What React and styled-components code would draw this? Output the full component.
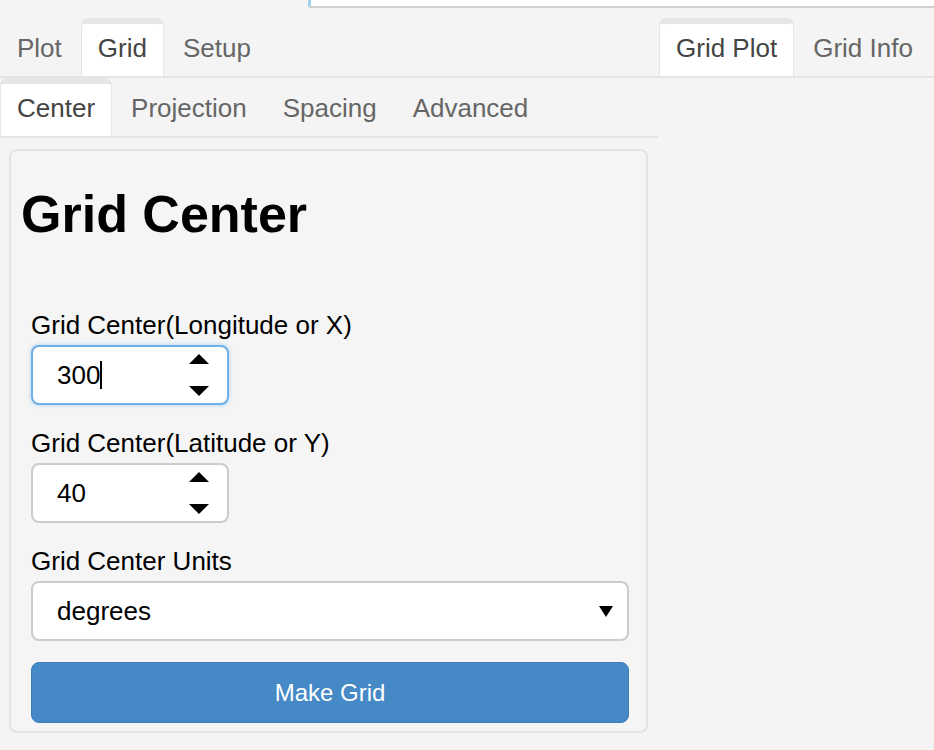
import React from "react";
import styled, { createGlobalStyle } from "styled-components";

const Global = createGlobalStyle`
  html, body { margin: 0; padding: 0; background: #f4f4f4; }
  body { font-family: "Liberation Sans", Arial, Helvetica, sans-serif; color: #000; }
  * { box-sizing: border-box; }
`;

const Page = styled.div`
  width: 934px;
  height: 750px;
  overflow: hidden;
  background: #f4f4f4;
`;

const TopField = styled.div`
  margin-left: 308px;
  height: 8px;
  background: #fff;
  border-bottom: 2px solid #cfcfcf;
  border-left: 3px solid #9fd3f0;
  border-bottom-left-radius: 3px;
`;

const Columns = styled.div`
  display: grid;
  grid-template-columns: 658px 1fr;
  margin-top: 10px;
`;

const Column = styled.div`
  display: flex;
  flex-direction: column;
`;

const TabBar = styled.div`
  display: flex;
  border-bottom: 2px solid #e4e4e4;
  padding-left: ${(p) => p.$offset || 0}px;
`;

const Tab = styled.div`
  height: 58px;
  padding: 0 16px 3px;
  margin-right: 2px;
  line-height: 49px;
  font-size: 26px;
  white-space: nowrap;
  color: ${(p) => (p.$active ? "#444" : "#666")};
  background: ${(p) => (p.$active ? "#fff" : "transparent")};
  border: 1px solid ${(p) => (p.$active ? "#e6e6e6" : "transparent")};
  border-top: 6px solid ${(p) => (p.$active ? "#e6e6e6" : "transparent")};
  border-bottom: none;
  border-radius: 7px 7px 0 0;
`;

const Panel = styled.div`
  margin: 11px 10px 0 9px;
  padding: 19px 17px 8px 10px;
  background: #f5f5f5;
  border: 2px solid #e4e4e4;
  border-radius: 8px;
`;

const Heading = styled.h1`
  margin: 16px 0 0;
  font-size: 52px;
  line-height: 57px;
  font-weight: 700;
  color: #000;
`;

const Form = styled.div`
  display: flex;
  flex-direction: column;
  gap: 23px;
  padding-left: 10px;
  margin-top: 67px;
`;

const Group = styled.div`
  display: flex;
  flex-direction: column;
  gap: 5px;
`;

const Label = styled.label`
  font-size: 26px;
  line-height: 30px;
  color: #000;
`;

const Field = styled.div`
  display: flex;
  align-items: center;
  justify-content: space-between;
  width: ${(p) => (p.$wide ? "100%" : "198px")};
  height: 60px;
  padding: 0 ${(p) => (p.$wide ? "14px" : "18px")} 0 24px;
  background: #fff;
  border: 2px solid ${(p) => (p.$focus ? "#6fb0e6" : "#cccccc")};
  border-radius: 8px;
  box-shadow: ${(p) => (p.$focus ? "0 0 4px rgba(102,175,233,0.55)" : "none")};
  font-size: 26px;
  color: #000;
`;

const Value = styled.span`
  display: inline-flex;
  align-items: center;
  line-height: 30px;
`;

const Caret = styled.span`
  display: inline-block;
  width: 2px;
  height: 28px;
  background: #000;
`;

const Button = styled.button`
  width: 100%;
  height: 61px;
  border: 1px solid #3c7db9;
  border-radius: 8px;
  background: #4589c6;
  color: #fff;
  font-family: "Liberation Sans", Arial, Helvetica, sans-serif;
  font-size: 24px;
  padding: 0;
  margin-top: -2px;
  cursor: pointer;
`;

const Spinner = () => (
  <svg width="20" height="42" viewBox="0 0 20 42" aria-hidden="true">
    <polygon points="10,0 20,10 0,10" fill="#000" />
    <polygon points="0,32 20,32 10,42" fill="#000" />
  </svg>
);

const DownArrow = () => (
  <svg width="14" height="11" viewBox="0 0 14 11" aria-hidden="true">
    <polygon points="0,0 14,0 7,11" fill="#000" />
  </svg>
);

export default function App() {
  return (
    <Page>
      <Global />
      <TopField />
      <Columns>
        <Column>
          <TabBar>
            <Tab>Plot</Tab>
            <Tab $active>Grid</Tab>
            <Tab>Setup</Tab>
          </TabBar>
          <TabBar>
            <Tab $active>Center</Tab>
            <Tab>Projection</Tab>
            <Tab>Spacing</Tab>
            <Tab>Advanced</Tab>
          </TabBar>
          <Panel>
            <Heading>Grid Center</Heading>
            <Form>
              <Group>
                <Label>Grid Center(Longitude or X)</Label>
                <Field $focus>
                  <Value>
                    300
                    <Caret />
                  </Value>
                  <Spinner />
                </Field>
              </Group>
              <Group>
                <Label>Grid Center(Latitude or Y)</Label>
                <Field>
                  <Value>40</Value>
                  <Spinner />
                </Field>
              </Group>
              <Group>
                <Label>Grid Center Units</Label>
                <Field $wide>
                  <Value>degrees</Value>
                  <DownArrow />
                </Field>
              </Group>
              <Button>Make Grid</Button>
            </Form>
          </Panel>
        </Column>
        <Column>
          <TabBar $offset={1}>
            <Tab $active>Grid Plot</Tab>
            <Tab>Grid Info</Tab>
          </TabBar>
        </Column>
      </Columns>
    </Page>
  );
}
